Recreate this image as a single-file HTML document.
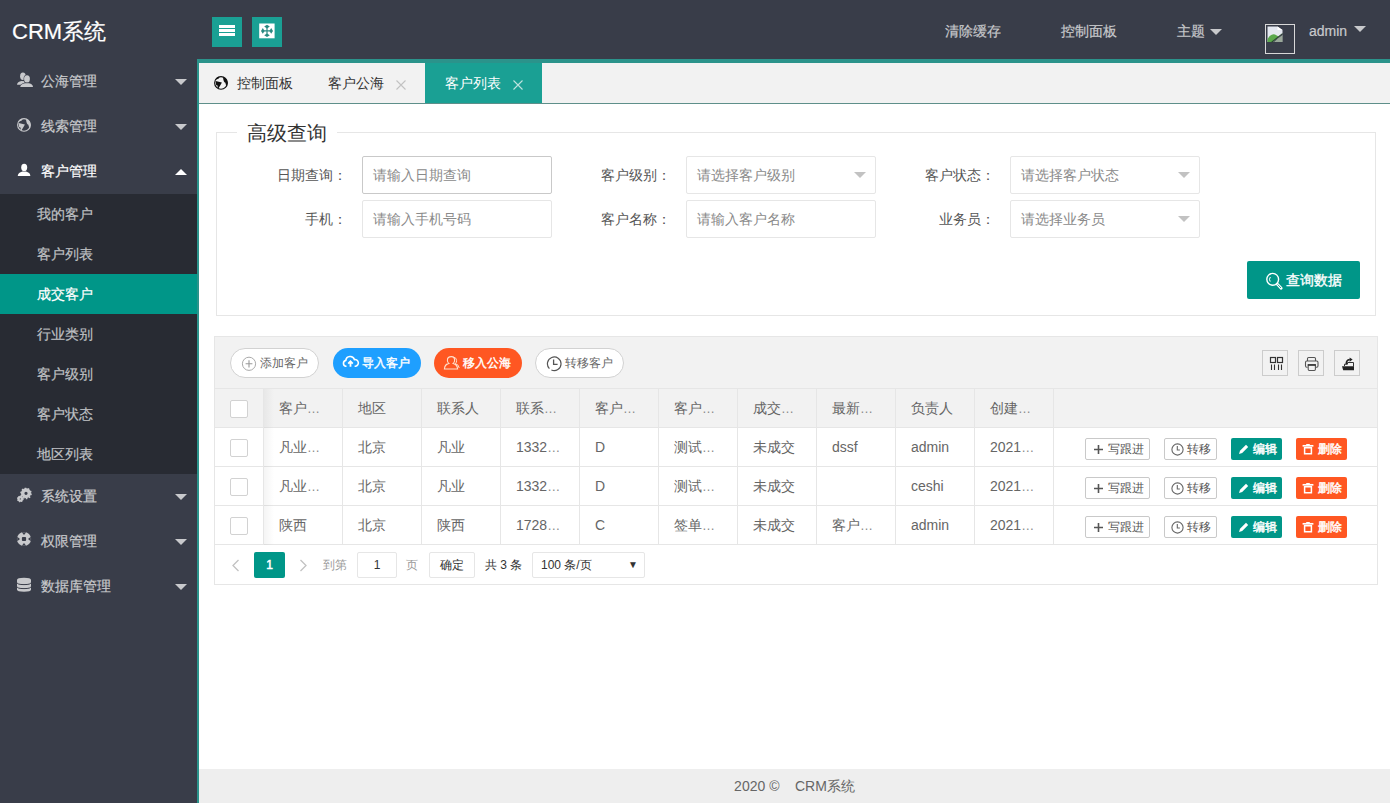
<!DOCTYPE html>
<html><head><meta charset="utf-8">
<style>
*{margin:0;padding:0;box-sizing:border-box}
html,body{width:1390px;height:803px;overflow:hidden;background:#fff;font-family:"Liberation Sans",sans-serif;font-size:14px;color:#333;-webkit-text-stroke-width:0.2px}
.abs{position:absolute}
svg{display:block}
/* header */
#hd{position:absolute;left:0;top:0;width:1390px;height:59px;background:#393D49}
#logo{position:absolute;left:12px;top:17px;font-size:22px;line-height:30px;color:#fff;white-space:nowrap}
.tbtn{position:absolute;top:17px;width:30px;height:30px;background:#1AA094}
.hlink{position:absolute;top:20px;line-height:22px;color:#c8c9cc;font-size:14px;white-space:nowrap}
.tri{position:absolute;width:0;height:0;border-left:6px solid transparent;border-right:6px solid transparent;border-top:6px solid #c8c9cc}
/* sidebar */
#side{position:absolute;left:0;top:59px;width:197px;height:744px;background:#393D49}
.mi{position:absolute;left:0;width:197px;height:45px;color:#c8c9cc;font-size:14px}
.mi .t{position:absolute;left:41px;top:0;line-height:45px;white-space:nowrap}
.mi .ic{position:absolute;left:16px;top:15px;width:16px;height:16px}
.mi .tri{left:175px;top:20px}
#sub{position:absolute;left:0;top:193px;width:197px;height:280px;background:#282B33}
.si{position:absolute;left:0;width:197px;height:40px;line-height:40px;color:#bfc0c3;font-size:14px}
.si span{position:absolute;left:37px;top:0;white-space:nowrap}
.si.on{background:#009688;color:#fff}
/* frame */
#frame{position:absolute;left:197px;top:59px;width:1193px;height:744px;background:#2b938b}
#body{position:absolute;left:199px;top:62px;width:1191px;height:741px;background:#fff;-webkit-text-stroke-width:0}
#tabs{position:absolute;left:0;top:1px;width:1191px;height:41px;background:#f2f2f2;border-bottom:1px solid #5e8f8a}
.tab{position:absolute;top:0;height:40px;line-height:40px;font-size:14px;color:#333;white-space:nowrap}
.tab .x{position:absolute;top:0;color:#b5b5b5;font-size:15px}
.tab.on{background:#1AA094;color:#fff}
.tab.on .x{color:#cde9e6}
/* fieldset */
#fs{position:absolute;left:17px;top:70px;width:1160px;height:184px;border:1px solid #e6e6e6}
#legend{position:absolute;left:38px;top:57px;padding:0 10px;background:#fff;font-size:20px;line-height:28px;color:#333;font-weight:300;white-space:nowrap}
.lab{position:absolute;width:110px;padding-right:15px;text-align:right;height:38px;line-height:38px;color:#555;font-size:14px;white-space:nowrap}
.inp{position:absolute;width:190px;height:38px;border:1px solid #e6e6e6;border-radius:2px;background:#fff;line-height:36px;padding-left:10px;color:#8a8a8a;font-size:14px;white-space:nowrap}
.inp .dd{position:absolute;right:9px;top:15px;width:0;height:0;border-left:6px solid transparent;border-right:6px solid transparent;border-top:6px solid #c2c2c2}
#qbtn{-webkit-text-stroke-width:0.35px;position:absolute;left:1048px;top:199px;width:113px;height:38px;background:#009688;border-radius:2px;color:#fff;line-height:38px;font-size:14px}
/* table */
#tbl{position:absolute;left:15px;top:274px;width:1164px;height:249px;border:1px solid #e6e6e6;background:#fff}
#tool{position:absolute;left:0;top:0;width:1162px;height:52px;background:#f2f2f2;border-bottom:1px solid #e6e6e6}
.pill{position:absolute;top:11px;height:30px;border-radius:15px;font-size:12px;line-height:28px;white-space:nowrap}
.ticon{position:absolute;top:13px;width:26px;height:26px;border:1px solid #ccc;background:#f2f2f2}
.row{position:absolute;left:0;width:1162px;height:39px;border-bottom:1px solid #e6e6e6}
.row.h{background:#f2f2f2}
.el{font-style:normal;color:#8a8a8a;font-size:13px}
.cell{position:absolute;top:0;height:38px;line-height:38px;padding-left:15px;font-size:14px;color:#666;white-space:nowrap}
.vl{position:absolute;top:0;width:1px;height:38px;background:#e6e6e6}
.cb{position:absolute;left:15px;top:11px;width:18px;height:18px;border:1px solid #d2d2d2;background:#fff;border-radius:2px}
.wb{border:1px solid #c9c9c9;background:#fff;color:#555}.gb{background:#009688;color:#fff;line-height:22px;-webkit-text-stroke-width:0.45px}.ob{background:#FF5722;color:#fff;line-height:22px;-webkit-text-stroke-width:0.45px}
.xbtn{position:absolute;top:10px;height:22px;line-height:20px;font-size:12px;border-radius:2px;white-space:nowrap}
/* footer */
#foot{position:absolute;left:0;top:707px;width:1191px;height:34px;background:#eee;text-align:center;line-height:34px;color:#666;font-size:14px}
</style></head><body>

<div id="hd">
  <div id="logo">CRM系统</div>
  <div class="tbtn" style="left:212px">
    <svg width="30" height="30"><rect x="7" y="8" width="16" height="3" fill="#fff"/><rect x="7" y="12" width="16" height="3" fill="#fff"/><rect x="7" y="16" width="16" height="3" fill="#fff"/></svg>
  </div>
  <div class="tbtn" style="left:252px">
    <svg width="30" height="30"><rect x="7.2" y="6.5" width="15.4" height="14.8" fill="#fff"/><path d="M15 7.8L17.8 9.6 15 11.4 12.2 9.6Z M15 20L17.8 18.2 15 16.4 12.2 18.2Z M9 13.9L10.8 11.1 12.6 13.9 10.8 16.7Z M21 13.9L19.2 11.1 17.4 13.9 19.2 16.7Z" fill="#2a8a82"/><path d="M15 10v8M11 13.9h8" stroke="#2a8a82" stroke-width="1.2"/></svg>
  </div>
  <div class="hlink" style="left:945px">清除缓存</div>
  <div class="hlink" style="left:1061px">控制面板</div>
  <div class="hlink" style="left:1177px">主题</div>
  <div class="tri" style="left:1210px;top:29px"></div>
  <div class="abs" style="left:1265px;top:24px;width:30px;height:30px;border:1px solid #d8d8d8"><svg class="abs" style="left:1px;top:1px" width="18" height="18"><path d="M0.5 0.5H10.5L15.5 4V16H0.5Z" fill="#e4e8f0"/><path d="M10.5 0.5V4H15.5Z" fill="#fff"/><path d="M0.5 13Q4 7 8 8.4L12 10.8 5.6 16H0.5Z" fill="#5aa84c"/><path d="M4.6 16.2L15.6 7.6" stroke="#2b4a2e" stroke-width="1.2"/><path d="M15.6 7.6V16H6Z" fill="#393D49"/><path d="M11 12.2L15.5 9V16H7Z" fill="#9aa89a"/></svg></div>
  <div class="hlink" style="left:1309px">admin</div>
  <div class="tri" style="left:1354px;top:26px"></div>
</div>

<div id="side">
  <div class="mi" style="top:0"><svg class="abs" style="left:17px;top:13px" width="17" height="16"><ellipse cx="5.9" cy="4.3" rx="2.8" ry="3.7" fill="#c8c9cc"/><path d="M0 12.8Q0.4 9.4 4.5 9L7.5 9.2 7.5 12.8Z" fill="#c8c9cc"/><ellipse cx="10" cy="6.9" rx="3.4" ry="4.1" fill="#393D49"/><ellipse cx="10" cy="6.9" rx="2.9" ry="3.7" fill="#c8c9cc"/><path d="M2.6 15.5Q3.2 11.2 8 10.8L12 10.8Q16 11.2 16.5 15.5Z" fill="#393D49"/><path d="M3.2 15Q3.8 11.6 8 11.2L12 11.2Q15.6 11.6 16 15Z" fill="#c8c9cc"/></svg><span class="t">公海管理</span><div class="tri"></div></div>
  <div class="mi" style="top:45px"><svg class="abs" style="left:16px;top:12.5px" width="16" height="16"><circle cx="8" cy="7.9" r="6.35" fill="none" stroke="#c8c9cc" stroke-width="1.15"/><path d="M2.2 4.8Q3.8 2.2 6.6 1.6L5.8 3.6Q4 4.2 2.2 5Z M2.6 6.1L8.9 7.5 7.8 9.6 5.4 13.6 4.5 12.8 4.7 10.8 3.1 10Z M10 1.9Q14.6 3.4 14.6 8L13.8 11.4Q12.3 9.2 12.4 7.8Q10.3 6.8 10 1.9Z" fill="#c8c9cc"/></svg><span class="t">线索管理</span><div class="tri"></div></div>
  <div class="mi" style="top:90px;color:#fff"><svg class="abs" style="left:16px;top:14px" width="16" height="16"><ellipse cx="8.2" cy="4.4" rx="3" ry="3.7" fill="#fff"/><path d="M1.7 13Q2.2 9.6 6.4 8.6L10 8.6Q14 9.6 14.4 13Z" fill="#fff"/></svg><span class="t">客户管理</span><div class="tri" style="border-top:0;border-bottom:6px solid #fff"></div></div>
  <div id="sub" style="top:135px">
    <div class="si" style="top:0"><span>我的客户</span></div>
    <div class="si" style="top:40px"><span>客户列表</span></div>
    <div class="si on" style="top:80px"><span>成交客户</span></div>
    <div class="si" style="top:120px"><span>行业类别</span></div>
    <div class="si" style="top:160px"><span>客户级别</span></div>
    <div class="si" style="top:200px"><span>客户状态</span></div>
    <div class="si" style="top:240px"><span>地区列表</span></div>
  </div>
  <div class="mi" style="top:415px"><svg class="abs" style="left:16px;top:11px" width="17" height="19"><circle cx="10" cy="8.3" r="3.3" fill="none" stroke="#c8c9cc" stroke-width="3.4"/><circle cx="10" cy="8.5" r="5" fill="none" stroke="#c8c9cc" stroke-width="1.6" stroke-dasharray="1.6 1.5"/><circle cx="4.3" cy="13.9" r="1.7" fill="none" stroke="#c8c9cc" stroke-width="2.2"/><circle cx="4.3" cy="13.9" r="2.8" fill="none" stroke="#c8c9cc" stroke-width="1.1" stroke-dasharray="1.2 1"/></svg><span class="t">系统设置</span><div class="tri"></div></div>
  <div class="mi" style="top:460px"><svg class="abs" style="left:16px;top:12px" width="16" height="16"><circle cx="8" cy="8" r="7.1" fill="#c8c9cc"/><rect x="5.9" y="5.9" width="4.2" height="4.2" rx="1" fill="#393D49"/><path d="M5.8 1.2h4.4L8 4Z M5.8 14.8h4.4L8 12Z M1.2 5.8v4.4L4 8Z M14.8 5.8v4.4L12 8Z" fill="#393D49"/></svg><span class="t">权限管理</span><div class="tri"></div></div>
  <div class="mi" style="top:505px"><svg class="abs" style="left:16px;top:13px" width="16" height="16"><path d="M1 3Q1 0.8 8 0.8T15 3V12.6Q15 14.8 8 14.8T1 12.6Z" fill="#c8c9cc"/><path d="M1 5.6Q1 7.6 8 7.6T15 5.6 M1 9.6Q1 11.6 8 11.6T15 9.6" fill="none" stroke="#393D49" stroke-width="1"/></svg><span class="t">数据库管理</span><div class="tri"></div></div>
</div>

<div id="frame"></div>
<div id="body">
  <div class="abs" style="left:0;top:0;width:1191px;height:1px;background:#2b938b"></div>
  <div id="tabs">
    <div class="tab" style="left:0;width:109px"><svg class="abs" style="left:14px;top:12px" width="16" height="16"><circle cx="8" cy="7.9" r="6.35" fill="none" stroke="#111" stroke-width="1.15"/><path d="M2.2 4.8Q3.8 2.2 6.6 1.6L5.8 3.6Q4 4.2 2.2 5Z M2.6 6.1L8.9 7.5 7.8 9.6 5.4 13.6 4.5 12.8 4.7 10.8 3.1 10Z M10 1.9Q14.6 3.4 14.6 8L13.8 11.4Q12.3 9.2 12.4 7.8Q10.3 6.8 10 1.9Z" fill="#111"/></svg><span class="abs" style="left:38px">控制面板</span></div>
    <div class="tab" style="left:109px;width:117px"><span class="abs" style="left:20px">客户公海</span><svg class="abs" style="left:88px;top:17px" width="10" height="10"><path d="M0.5 0.5L9.5 9.5M9.5 0.5L0.5 9.5" stroke="#c2c2c2" stroke-width="1.1"/></svg></div>
    <div class="tab on" style="left:226px;width:117px"><span class="abs" style="left:20px">客户列表</span><svg class="abs" style="left:88px;top:17px" width="10" height="10"><path d="M0.5 0.5L9.5 9.5M9.5 0.5L0.5 9.5" stroke="#bfe3df" stroke-width="1.1"/></svg></div>
  </div>

  <div id="fs"></div>
  <div id="legend">高级查询</div>

  <div class="lab" style="left:53px;top:94px">日期查询：</div>
  <div class="inp" style="left:163px;top:94px;border-color:#c9c9c9">请输入日期查询</div>
  <div class="lab" style="left:377px;top:94px">客户级别：</div>
  <div class="inp" style="left:487px;top:94px">请选择客户级别<i class="dd"></i></div>
  <div class="lab" style="left:701px;top:94px">客户状态：</div>
  <div class="inp" style="left:811px;top:94px">请选择客户状态<i class="dd"></i></div>

  <div class="lab" style="left:53px;top:138px">手机：</div>
  <div class="inp" style="left:163px;top:138px">请输入手机号码</div>
  <div class="lab" style="left:377px;top:138px">客户名称：</div>
  <div class="inp" style="left:487px;top:138px">请输入客户名称</div>
  <div class="lab" style="left:701px;top:138px">业务员：</div>
  <div class="inp" style="left:811px;top:138px">请选择业务员<i class="dd"></i></div>

  <div id="qbtn"><svg class="abs" style="left:17px;top:10px" width="20" height="20"><circle cx="8.7" cy="8.3" r="5.9" fill="none" stroke="#fff" stroke-width="1.4"/><path d="M6.4 6Q4.6 8.2 6.2 10.6" fill="none" stroke="#fff" stroke-width="1"/><path d="M13.4 13.2L17.2 17.2" stroke="#fff" stroke-width="2.8" stroke-linecap="round"/><path d="M13.6 13.4L17 17" stroke="#009688" stroke-width="0.9"/></svg><span class="abs" style="left:39px">查询数据</span></div>

  <div id="tbl">
    <div id="tool">
      <div class="pill" style="left:15px;width:89px;border:1px solid #d2d2d2;background:#fff;color:#666"><svg class="abs" style="left:10px;top:7px" width="16" height="16"><circle cx="8" cy="7.8" r="6.6" fill="none" stroke="#aaa" stroke-width="1"/><path d="M8 4.2v7.2M4.6 7.8h6.8" stroke="#999" stroke-width="1.1"/></svg><span class="abs" style="left:29px">添加客户</span></div>
      <div class="pill" style="left:118px;width:88px;background:#1E9FFF;color:#fff;line-height:30px;-webkit-text-stroke-width:0.4px"><svg class="abs" style="left:9px;top:6px" width="18" height="18"><path d="M4.5 12.2H3.6A3 3 0 0 1 3.8 6.4 4.4 4.4 0 0 1 12.4 5.6 3.3 3.3 0 0 1 13.6 12.2H12.6" fill="none" stroke="#fff" stroke-width="1.6"/><path d="M8.5 12.8V7.6M6.2 9.6L8.5 7.2 10.8 9.6" fill="none" stroke="#fff" stroke-width="1.8"/></svg><span class="abs" style="left:29px">导入客户</span></div>
      <div class="pill" style="left:219px;width:88px;background:#FF5722;color:#fff;line-height:30px;-webkit-text-stroke-width:0.4px"><svg class="abs" style="left:8px;top:4px" width="20" height="20"><path d="M9.5 4.6Q12.6 4.6 12.6 8.2 12.6 10.4 11.2 11.4Q15.2 12.4 15.6 17H2.4Q2.8 12.4 6.8 11.4 5.4 10.4 5.4 8.2 5.4 4.6 9.5 4.6Z" fill="none" stroke="#ffe0cc" stroke-width="1.1"/><path d="M11.6 5.2Q14.6 5.6 14.6 8.6 14.6 10.6 13.4 11.6Q16.8 12.6 17.2 16" fill="none" stroke="#ffe0cc" stroke-width="1"/></svg><span class="abs" style="left:29px">移入公海</span></div>
      <div class="pill" style="left:320px;width:89px;border:1px solid #d2d2d2;background:#fff;color:#666"><svg class="abs" style="left:10px;top:7px" width="16" height="16"><path d="M3.4 12.6A6.8 6.8 0 1 1 5.4 14" fill="none" stroke="#555" stroke-width="1.2"/><path d="M7.6 3.4V8.4H11.6" fill="none" stroke="#555" stroke-width="1.3"/></svg><span class="abs" style="left:29px">转移客户</span></div>
      <div class="ticon" style="left:1047px"><svg class="abs" style="left:0;top:0" width="24" height="24"><rect x="7.5" y="6.5" width="5" height="5" fill="none" stroke="#333" stroke-width="1.2"/><rect x="14.5" y="6.5" width="5" height="5" fill="none" stroke="#333" stroke-width="1.2"/><path d="M8.5 13.5v5.5M11.5 13.5v5.5M15.5 13.5v5.5M18.5 13.5v5.5" stroke="#333" stroke-width="1.1"/></svg></div>
      <div class="ticon" style="left:1083px"><svg class="abs" style="left:0;top:0" width="24" height="24"><path d="M8.5 10V7.6Q8.5 6.5 9.6 6.5H15.4Q16.5 6.5 16.5 7.6V10" fill="none" stroke="#555" stroke-width="1.1"/><path d="M8.6 16.2H7.8Q6.5 16.2 6.5 14.8V11.4Q6.5 10 7.8 10H17.7Q19 10 19 11.4V14.8Q19 16.2 17.7 16.2H17" fill="none" stroke="#555" stroke-width="1.1"/><path d="M9.2 13.8H16.4V18.3Q16.4 19.5 15.3 19.5H10.3Q9.2 19.5 9.2 18.3Z" fill="none" stroke="#555" stroke-width="1.1"/><path d="M8.8 14h8" stroke="#333" stroke-width="1.6"/></svg></div>
      <div class="ticon" style="left:1119px"><svg class="abs" style="left:0;top:0" width="24" height="24"><path d="M9.5 15V13.2H12.5V11.5H18.5V15.5" fill="none" stroke="#333" stroke-width="1"/><path d="M7 15.2H19V19.3H8.2Z" fill="#222"/><path d="M11.3 13.2Q11 9.2 14.8 8.6" fill="none" stroke="#222" stroke-width="1.5"/><path d="M14.6 6.4L17.6 8.6 14.6 10.8Z" fill="#222"/></svg></div>
    </div>
<div class="row h" style="top:52px"><div class="cb"></div><i class="vl" style="left:48px"></i><i class="vl" style="left:127px"></i><i class="vl" style="left:206px"></i><i class="vl" style="left:285px"></i><i class="vl" style="left:364px"></i><i class="vl" style="left:443px"></i><i class="vl" style="left:522px"></i><i class="vl" style="left:601px"></i><i class="vl" style="left:680px"></i><i class="vl" style="left:759px"></i><i class="vl" style="left:838px"></i><span class="cell" style="left:49px">客户<i class="el">…</i></span><span class="cell" style="left:128px">地区</span><span class="cell" style="left:207px">联系人</span><span class="cell" style="left:286px">联系<i class="el">…</i></span><span class="cell" style="left:365px">客户<i class="el">…</i></span><span class="cell" style="left:444px">客户<i class="el">…</i></span><span class="cell" style="left:523px">成交<i class="el">…</i></span><span class="cell" style="left:602px">最新<i class="el">…</i></span><span class="cell" style="left:681px">负责人</span><span class="cell" style="left:760px">创建<i class="el">…</i></span></div>
<div class="row " style="top:91px"><div class="cb"></div><i class="vl" style="left:48px"></i><i class="vl" style="left:127px"></i><i class="vl" style="left:206px"></i><i class="vl" style="left:285px"></i><i class="vl" style="left:364px"></i><i class="vl" style="left:443px"></i><i class="vl" style="left:522px"></i><i class="vl" style="left:601px"></i><i class="vl" style="left:680px"></i><i class="vl" style="left:759px"></i><i class="vl" style="left:838px"></i><span class="cell" style="left:49px">凡业<i class="el">…</i></span><span class="cell" style="left:128px">北京</span><span class="cell" style="left:207px">凡业</span><span class="cell" style="left:286px">1332<i class="el">…</i></span><span class="cell" style="left:365px">D</span><span class="cell" style="left:444px">测试<i class="el">…</i></span><span class="cell" style="left:523px">未成交</span><span class="cell" style="left:602px">dssf</span><span class="cell" style="left:681px">admin</span><span class="cell" style="left:760px">2021<i class="el">…</i></span><span class="xbtn wb" style="left:870px;width:65px"><svg class="abs" style="left:7px;top:5px" width="11" height="11"><path d="M5.5 1v9M1 5.5h9" stroke="#555" stroke-width="1.6"/></svg><span class="abs" style="left:22px">写跟进</span></span><span class="xbtn wb" style="left:949px;width:53px"><svg class="abs" style="left:6px;top:4px" width="13" height="13"><circle cx="6.5" cy="6.5" r="5.6" fill="none" stroke="#666" stroke-width="1.1"/><path d="M6.3 3v4h2.6" fill="none" stroke="#666" stroke-width="1.1"/></svg><span class="abs" style="left:22px">转移</span></span><span class="xbtn gb" style="left:1016px;width:51px"><svg class="abs" style="left:7px;top:6px" width="11" height="11"><path d="M1 10l1-3.2L8 0.8l2.2 2.2L4.2 9z" fill="#fff"/></svg><span class="abs" style="left:22px;top:1px">编辑</span></span><span class="xbtn ob" style="left:1081px;width:51px"><svg class="abs" style="left:6px;top:6px" width="12" height="11"><path d="M0.6 1.8H11.4" stroke="#fff" stroke-width="1.7"/><path d="M4.2 0.6H7.8" stroke="#fff" stroke-width="1.2"/><path d="M2.6 3.8H9.4V9.8H2.6Z" fill="none" stroke="#fff" stroke-width="1.5"/></svg><span class="abs" style="left:22px;top:1px">删除</span></span></div>
<div class="row " style="top:130px"><div class="cb"></div><i class="vl" style="left:48px"></i><i class="vl" style="left:127px"></i><i class="vl" style="left:206px"></i><i class="vl" style="left:285px"></i><i class="vl" style="left:364px"></i><i class="vl" style="left:443px"></i><i class="vl" style="left:522px"></i><i class="vl" style="left:601px"></i><i class="vl" style="left:680px"></i><i class="vl" style="left:759px"></i><i class="vl" style="left:838px"></i><span class="cell" style="left:49px">凡业<i class="el">…</i></span><span class="cell" style="left:128px">北京</span><span class="cell" style="left:207px">凡业</span><span class="cell" style="left:286px">1332<i class="el">…</i></span><span class="cell" style="left:365px">D</span><span class="cell" style="left:444px">测试<i class="el">…</i></span><span class="cell" style="left:523px">未成交</span><span class="cell" style="left:602px"></span><span class="cell" style="left:681px">ceshi</span><span class="cell" style="left:760px">2021<i class="el">…</i></span><span class="xbtn wb" style="left:870px;width:65px"><svg class="abs" style="left:7px;top:5px" width="11" height="11"><path d="M5.5 1v9M1 5.5h9" stroke="#555" stroke-width="1.6"/></svg><span class="abs" style="left:22px">写跟进</span></span><span class="xbtn wb" style="left:949px;width:53px"><svg class="abs" style="left:6px;top:4px" width="13" height="13"><circle cx="6.5" cy="6.5" r="5.6" fill="none" stroke="#666" stroke-width="1.1"/><path d="M6.3 3v4h2.6" fill="none" stroke="#666" stroke-width="1.1"/></svg><span class="abs" style="left:22px">转移</span></span><span class="xbtn gb" style="left:1016px;width:51px"><svg class="abs" style="left:7px;top:6px" width="11" height="11"><path d="M1 10l1-3.2L8 0.8l2.2 2.2L4.2 9z" fill="#fff"/></svg><span class="abs" style="left:22px;top:1px">编辑</span></span><span class="xbtn ob" style="left:1081px;width:51px"><svg class="abs" style="left:6px;top:6px" width="12" height="11"><path d="M0.6 1.8H11.4" stroke="#fff" stroke-width="1.7"/><path d="M4.2 0.6H7.8" stroke="#fff" stroke-width="1.2"/><path d="M2.6 3.8H9.4V9.8H2.6Z" fill="none" stroke="#fff" stroke-width="1.5"/></svg><span class="abs" style="left:22px;top:1px">删除</span></span></div>
<div class="row " style="top:169px"><div class="cb"></div><i class="vl" style="left:48px"></i><i class="vl" style="left:127px"></i><i class="vl" style="left:206px"></i><i class="vl" style="left:285px"></i><i class="vl" style="left:364px"></i><i class="vl" style="left:443px"></i><i class="vl" style="left:522px"></i><i class="vl" style="left:601px"></i><i class="vl" style="left:680px"></i><i class="vl" style="left:759px"></i><i class="vl" style="left:838px"></i><span class="cell" style="left:49px">陕西</span><span class="cell" style="left:128px">北京</span><span class="cell" style="left:207px">陕西</span><span class="cell" style="left:286px">1728<i class="el">…</i></span><span class="cell" style="left:365px">C</span><span class="cell" style="left:444px">签单<i class="el">…</i></span><span class="cell" style="left:523px">未成交</span><span class="cell" style="left:602px">客户<i class="el">…</i></span><span class="cell" style="left:681px">admin</span><span class="cell" style="left:760px">2021<i class="el">…</i></span><span class="xbtn wb" style="left:870px;width:65px"><svg class="abs" style="left:7px;top:5px" width="11" height="11"><path d="M5.5 1v9M1 5.5h9" stroke="#555" stroke-width="1.6"/></svg><span class="abs" style="left:22px">写跟进</span></span><span class="xbtn wb" style="left:949px;width:53px"><svg class="abs" style="left:6px;top:4px" width="13" height="13"><circle cx="6.5" cy="6.5" r="5.6" fill="none" stroke="#666" stroke-width="1.1"/><path d="M6.3 3v4h2.6" fill="none" stroke="#666" stroke-width="1.1"/></svg><span class="abs" style="left:22px">转移</span></span><span class="xbtn gb" style="left:1016px;width:51px"><svg class="abs" style="left:7px;top:6px" width="11" height="11"><path d="M1 10l1-3.2L8 0.8l2.2 2.2L4.2 9z" fill="#fff"/></svg><span class="abs" style="left:22px;top:1px">编辑</span></span><span class="xbtn ob" style="left:1081px;width:51px"><svg class="abs" style="left:6px;top:6px" width="12" height="11"><path d="M0.6 1.8H11.4" stroke="#fff" stroke-width="1.7"/><path d="M4.2 0.6H7.8" stroke="#fff" stroke-width="1.2"/><path d="M2.6 3.8H9.4V9.8H2.6Z" fill="none" stroke="#fff" stroke-width="1.5"/></svg><span class="abs" style="left:22px;top:1px">删除</span></span></div>
<div class="abs" style="left:49px;top:52px;width:10px;height:156px;background:linear-gradient(to right,rgba(0,0,0,.045),rgba(0,0,0,0))"></div>
<div class="abs" style="left:0;top:208px;width:1162px;height:39px">
  <svg class="abs" style="left:16px;top:14px" width="9" height="13"><path d="M7.5 1L2 6.5 7.5 12" fill="none" stroke="#c2c2c2" stroke-width="1.3"/></svg>
  <span class="abs" style="left:39px;top:7px;width:31px;height:26px;background:#009688;border-radius:2px;color:#fff;font-size:12px;line-height:26px;text-align:center;-webkit-text-stroke-width:0.5px">1</span>
  <svg class="abs" style="left:84px;top:14px" width="9" height="13"><path d="M1.5 1L7 6.5 1.5 12" fill="none" stroke="#c2c2c2" stroke-width="1.3"/></svg>
  <span class="abs" style="left:108px;top:7px;line-height:26px;font-size:12px;color:#999">到第</span>
  <span class="abs" style="left:142px;top:7px;width:40px;height:26px;border:1px solid #e6e6e6;border-radius:2px;line-height:24px;text-align:center;font-size:12px;color:#333">1</span>
  <span class="abs" style="left:191px;top:7px;line-height:26px;font-size:12px;color:#999">页</span>
  <span class="abs" style="left:214px;top:7px;width:46px;height:26px;border:1px solid #e6e6e6;border-radius:2px;line-height:24px;text-align:center;font-size:12px;color:#333">确定</span>
  <span class="abs" style="left:270px;top:7px;line-height:26px;font-size:12px;color:#333">共 3 条</span>
  <span class="abs" style="left:317px;top:7px;width:113px;height:26px;border:1px solid #e6e6e6;border-radius:2px;line-height:24px;padding-left:8px;font-size:12px;color:#333">100 条/页<span class="abs" style="left:95px;top:0;font-size:10px">▼</span></span>
</div>
  </div>

  <div id="foot">2020 ©&nbsp;&nbsp;&nbsp; CRM系统</div>
</div>
</body></html>
